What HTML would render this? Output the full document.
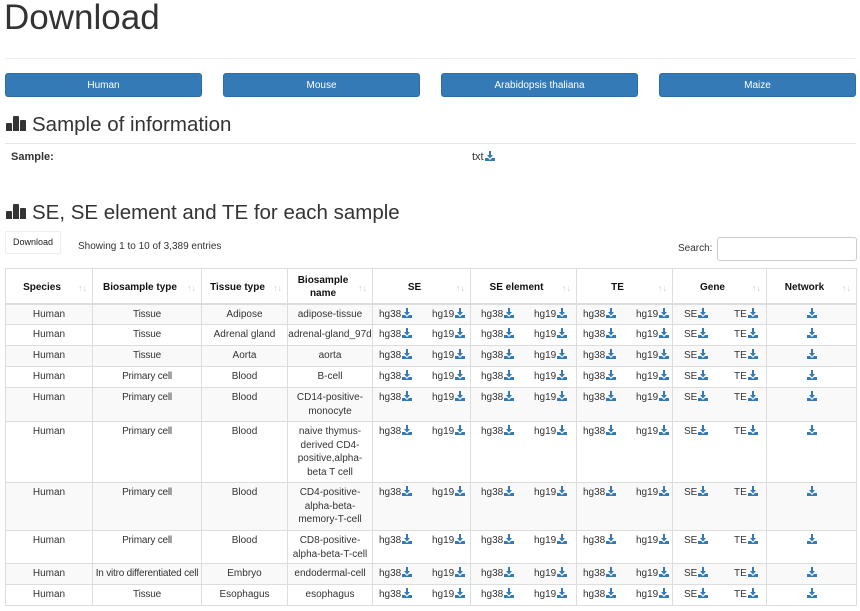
<!DOCTYPE html>
<html><head><meta charset="utf-8">
<style>
*{box-sizing:border-box;margin:0;padding:0}
body{width:860px;height:611px;overflow:hidden;background:#fff;font-family:"Liberation Sans",sans-serif;color:#333;position:relative;font-size:10px}
.a{position:absolute}
.btn{position:absolute;top:73px;height:24px;width:197px;background:#337ab7;border:1px solid #2e6da4;border-radius:3px;color:#fff;font-size:10px;text-align:center;line-height:24px}
.h2{font-size:20.5px;color:#333;white-space:nowrap}
.bars{display:inline-block;vertical-align:baseline;margin-right:5px}
.bars i{display:inline-block;background:#333;width:6px;margin-right:1px;vertical-align:baseline;border-radius:1px 1px 0 0}
table{position:absolute;left:5px;top:268px;width:851px;border-collapse:collapse;table-layout:fixed}
th,td{border:1px solid #ddd;text-align:center;vertical-align:top;line-height:13.5px;font-size:10px;padding:3px 2px 0}
th{vertical-align:middle;font-weight:bold;color:#111;position:relative;height:35px;border-bottom:2px solid #ddd;text-align:center;padding-right:16px}
th .s{position:absolute;right:5px;top:13px;color:#ccc;font-size:9px;font-weight:normal}
tbody tr:nth-child(odd) td{background:#f9f9f9}
td.d{text-align:left;padding-left:6px;white-space:nowrap}
td.d span{display:inline-block}
.ic{display:inline-block;width:10px;height:10px;vertical-align:-1px;margin-left:1px}
</style></head><body>
<div class="a" style="left:4px;top:-2px;font-size:35px;color:#333">Download</div>
<div class="a" style="left:5px;top:58px;width:851px;border-top:1px solid #eee"></div>
<div class="btn" style="left:5px">Human</div>
<div class="btn" style="left:223px">Mouse</div>
<div class="btn" style="left:441px">Arabidopsis thaliana</div>
<div class="btn" style="left:659px">Maize</div>
<div class="a h2" style="left:6px;top:113px"><span class="bars"><i style="height:8px"></i><i style="height:15px"></i><i style="height:11px"></i></span>Sample of information</div>
<div class="a" style="left:5px;top:143px;width:851px;border-top:1px solid #e5e5e5"></div>
<div class="a" style="left:11px;top:151px;font-weight:bold;font-size:11px">Sample:</div>
<div class="a" style="left:472px;top:151px;font-size:11px">txt<svg class="ic" viewBox="0 0 10 10"><path d="M4 0h2v4h2L5 7.5 2 4h2z" fill="#337ab7"/><path d="M0 7h3l2 2 2-2h3v3H0z" fill="#337ab7"/></svg></div>
<div class="a h2" style="left:6px;top:201px"><span class="bars"><i style="height:8px"></i><i style="height:15px"></i><i style="height:11px"></i></span>SE, SE element and TE for each sample</div>
<div class="a" style="left:5px;top:231px;width:56px;height:23px;border:1px solid #eee;border-radius:2px;font-size:9px;text-align:center;line-height:21px;color:#222">Download</div>
<div class="a" style="left:78px;top:241px;font-size:10px">Showing 1 to 10 of 3,389 entries</div>
<div class="a" style="left:678px;top:243px;font-size:10px">Search:</div>
<div class="a" style="left:717px;top:237px;width:140px;height:24px;border:1px solid #ccc;border-radius:3px"></div>
<table>
<colgroup><col style="width:87px"><col style="width:109px"><col style="width:86px"><col style="width:85px"><col style="width:98px"><col style="width:106px"><col style="width:96px"><col style="width:94px"><col style="width:90px"></colgroup>
<thead><tr><th>Species<span class="s">↑↓</span></th><th>Biosample type<span class="s">↑↓</span></th><th>Tissue type<span class="s">↑↓</span></th><th>Biosample<br>name<span class="s">↑↓</span></th><th>SE<span class="s">↑↓</span></th><th>SE element<span class="s">↑↓</span></th><th>TE<span class="s">↑↓</span></th><th>Gene<span class="s">↑↓</span></th><th>Network<span class="s">↑↓</span></th></tr></thead>
<tbody id="tb"></tbody></table>
<script>
var I='<svg class="ic" viewBox="0 0 10 10"><path d="M4 0h2v4h2L5 7.5 2 4h2z" fill="#337ab7"/><path d="M0 7h3l2 2 2-2h3v3H0z" fill="#337ab7"/></svg>';
var rows=[["Human","Tissue","Adipose","adipose-tissue",21],["Human","Tissue","Adrenal gland","adrenal-gland_97d",21],["Human","Tissue","Aorta","aorta",21],["Human","Primary cell","Blood","B-cell",21],["Human","Primary cell","Blood","CD14-positive-<br>monocyte",34],["Human","Primary cell","Blood","naive thymus-<br>derived CD4-<br>positive,alpha-<br>beta T cell",61],["Human","Primary cell","Blood","CD4-positive-<br>alpha-beta-<br>memory-T-cell",48],["Human","Primary cell","Blood","CD8-positive-<br>alpha-beta-T-cell",33],["Human","In vitro differentiated cell","Embryo","endodermal-cell",21],["Human","Tissue","Esophagus","esophagus",21]];
var h='';
function d(a,b,w,p){return '<td class="d" style="padding-left:'+p+'px"><span style="width:'+w+'px">'+a+I+'</span><span>'+b+I+'</span></td>';}
rows.forEach(function(r){h+='<tr style="height:'+r[4]+'px"><td>'+r[0]+'</td><td style="white-space:nowrap;padding:3px 0 0;letter-spacing:-0.2px">'+r[1]+'</td><td>'+r[2]+'</td><td style="white-space:nowrap;padding:3px 0 0">'+r[3]+'</td>'+d('hg38','hg19',53,6)+d('hg38','hg19',53,10)+d('hg38','hg19',53,6)+'<td class="d" style="padding-left:11px"><span style="width:50px">SE'+I+'</span><span>TE'+I+'</span></td><td>'+I+'</td></tr>';});
document.getElementById('tb').innerHTML=h;
</script>
</body></html>
